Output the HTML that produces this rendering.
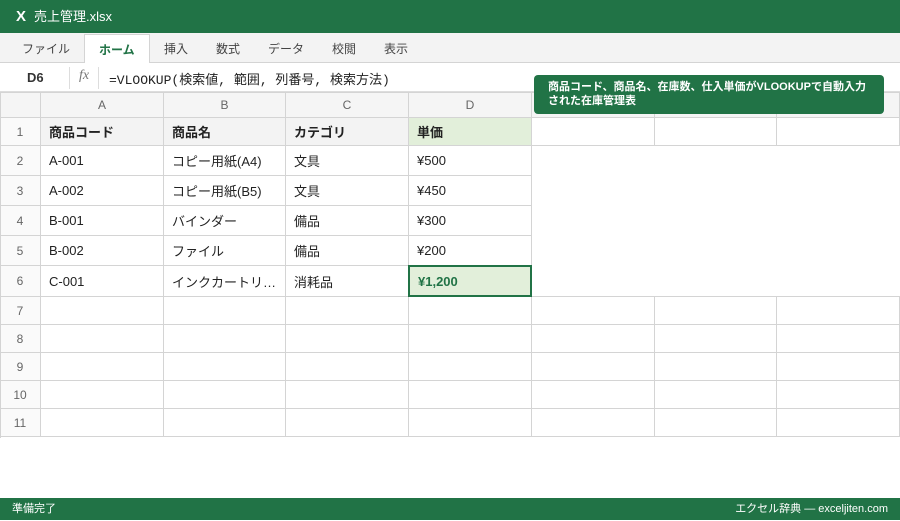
<!DOCTYPE html>
<html><head><meta charset="utf-8"><style>
*{margin:0;padding:0;box-sizing:border-box}
body{width:900px;height:520px;overflow:hidden;background:#fff;font-family:"Liberation Sans","Noto Sans CJK JP",sans-serif;position:relative;color:#222}
.a{position:absolute}
.c{position:absolute;border-right:1px solid #d4d4d4;border-bottom:1px solid #d4d4d4;font-size:13px;padding-left:8px;display:flex;align-items:center;white-space:nowrap;overflow:hidden}
.h{background:#f5f5f5;color:#666;justify-content:center;padding:0;font-size:12px}
</style></head><body>
<div class="a" style="left:0;top:0;width:900px;height:33px;background:#217346;color:#fff;font-size:13px;line-height:34px;padding-left:16px"><b style="font-size:15px;margin-right:8px">X</b>売上管理.xlsx</div>
<div class="a" style="left:0;top:33px;width:900px;height:30px;background:#f3f3f3;border-bottom:1px solid #d4d4d4"></div>
<div class="a" style="left:84px;top:34px;width:66px;height:30px;background:#fff;border:1px solid #d4d4d4;border-bottom:none"></div>
<div class="a" style="top:40px;font-size:12px;color:#444;left:22px">ファイル</div>
<div class="a" style="top:41px;font-size:12px;color:#217346;font-weight:bold;left:99px">ホーム</div>
<div class="a" style="top:40px;font-size:12px;color:#444;left:164px">挿入</div>
<div class="a" style="top:40px;font-size:12px;color:#444;left:216px">数式</div>
<div class="a" style="top:40px;font-size:12px;color:#444;left:268px">データ</div>
<div class="a" style="top:40px;font-size:12px;color:#444;left:332px">校閲</div>
<div class="a" style="top:40px;font-size:12px;color:#444;left:384px">表示</div>
<div class="a" style="left:0;top:63px;width:900px;height:30px;background:#fff;border-bottom:2px solid #ddd"></div>
<div class="a" style="left:27px;top:70px;font-size:13px;font-weight:bold;color:#333">D6</div>
<div class="a" style="left:69px;top:67px;width:1px;height:22px;background:#ddd"></div>
<div class="a" style="left:79px;top:68px;font-size:14px;font-style:italic;color:#777;font-family:'Liberation Serif',serif">fx</div>
<div class="a" style="left:98px;top:67px;width:1px;height:22px;background:#ddd"></div>
<div class="a" style="left:109px;top:69px;font-size:13px;font-family:'Liberation Mono','Noto Sans CJK JP',monospace;color:#222">=VLOOKUP(検索値, 範囲, 列番号, 検索方法)</div>
<div id="g"></div>
<div class="a" style="left:0;top:93px;width:1px;height:345px;background:#d4d4d4"></div>
<div class="a" style="left:534px;top:75px;width:350px;height:39px;background:#217346;border-radius:4px;color:#fff;font-size:11px;font-weight:bold;line-height:14px;padding:5px 0 0 14px;z-index:5">商品コード、商品名、在庫数、仕入単価がVLOOKUPで自動入力<br>された在庫管理表</div>
<div class="a" style="left:0;top:498px;width:900px;height:22px;background:#217346;color:#fff;font-size:11px;line-height:23px;padding:0 12px"><span>準備完了</span><span style="float:right">エクセル辞典 — exceljiten.com</span></div>
<script>
var xs=[0,41,164,286,409,532,655,777,900],ys=[93,118,146,176,206,236,266,297,325,353,381,409,437];
var d=[["商品コード","商品名","カテゴリ","単価"],["A-001","コピー用紙(A4)","文具","¥500"],["A-002","コピー用紙(B5)","文具","¥450"],["B-001","バインダー","備品","¥300"],["B-002","ファイル","備品","¥200"],["C-001","インクカートリ…","消耗品","¥1,200"]];
var h='',L="ABCDEFG";
for(var r=0;r<12;r++)for(var c=0;c<8;c++){
 if(r>=2&&r<=6&&c>=5)continue;
 var s='left:'+xs[c]+'px;top:'+ys[r]+'px;width:'+(xs[c+1]-xs[c])+'px;height:'+(ys[r+1]-ys[r])+'px;',cl='c',t='';
 if(r==7&&c>=5){s='left:'+xs[c]+'px;top:'+(ys[r]-1)+'px;width:'+(xs[c+1]-xs[c])+'px;height:'+(ys[r+1]-ys[r]+1)+'px;border-top:1px solid #d4d4d4;';}
 if(r==0){cl+=' h';t=c?L[c-1]:'';s+='border-top:1px solid #d4d4d4;top:'+(ys[0]-1)+'px;height:26px;';}
 else if(c==0){cl+=' h';t=r;s+='background:#fafafa;';}
 else{ if(r<=6&&c<=4)t=d[r-1][c-1];
  if(r==1&&c<=4){s+='font-weight:bold;background:'+(c==4?'#e2efda':'#f3f3f3')+';';}
  if(r==6&&c==4){s+='background:#e2efda;border:2px solid #217346;color:#217346;font-weight:bold;left:'+(xs[c]-1)+'px;top:'+(ys[r]-1)+'px;width:'+(xs[c+1]-xs[c]+1)+'px;height:'+(ys[r+1]-ys[r]+1)+'px;z-index:2;';}
 }
 h+='<div class="'+cl+'" style="'+s+'">'+t+'</div>';}
document.getElementById('g').innerHTML=h;
</script>
</body></html>
